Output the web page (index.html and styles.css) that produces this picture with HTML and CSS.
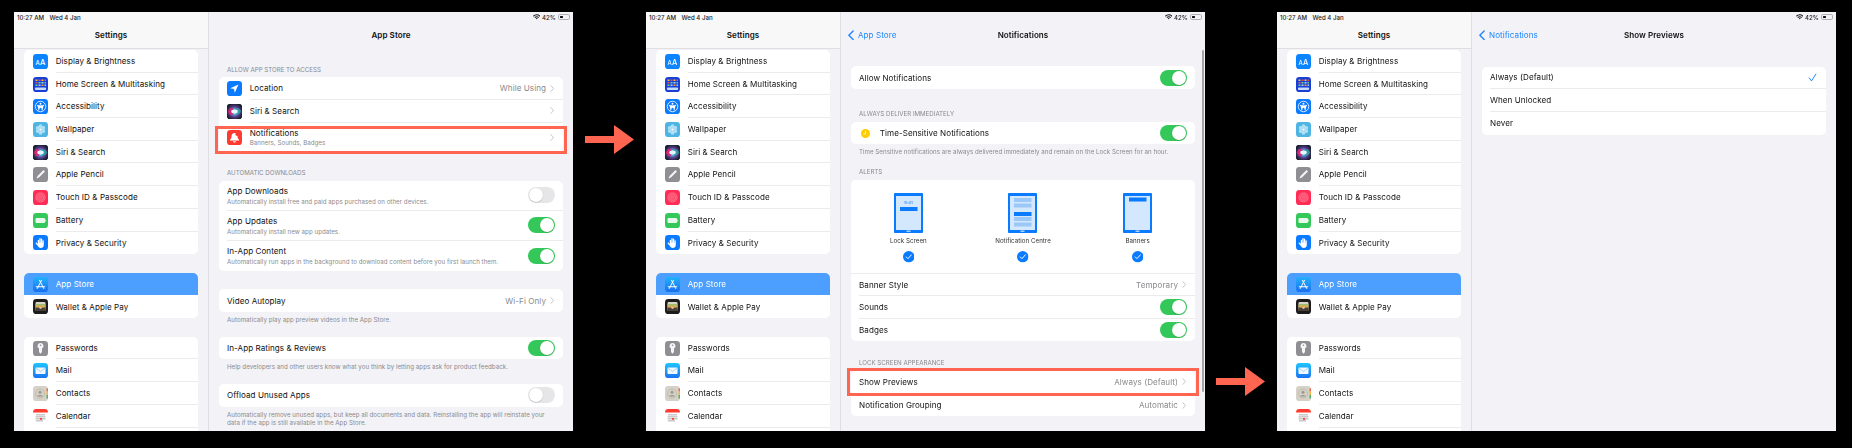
FILE: index.html
```html
<!DOCTYPE html>
<html lang="en">
<head>
<meta charset="utf-8">
<title>iPad Settings walkthrough</title>
<link rel="stylesheet" href="styles.css">
</head>
<body>
<svg class="defs" xmlns="http://www.w3.org/2000/svg">
  <defs>
    <radialGradient id="g-siri" cx="50%" cy="52%" r="55%"><stop offset="0" stop-color="#dff4ff"/><stop offset=".3" stop-color="#4fb6e0"/><stop offset=".62" stop-color="#5a3a8c"/><stop offset="1" stop-color="#17202e"/></radialGradient>
    <linearGradient id="g-store" x1="0" y1="0" x2="0" y2="1"><stop offset="0" stop-color="#22b2fb"/><stop offset="1" stop-color="#1a6ff0"/></linearGradient>
    <linearGradient id="g-mail" x1="0" y1="0" x2="0" y2="1"><stop offset="0" stop-color="#1ec6ff"/><stop offset="1" stop-color="#1a72f2"/></linearGradient>
    <symbol id="i-display" viewBox="0 0 30 30"><rect width="30" height="30" rx="6.7" fill="#0a84ff"/><text x="5" y="21" font-size="12" font-family="Inter" font-weight="500" fill="#fff">A</text><text x="14" y="21" font-size="15" font-family="Inter" font-weight="500" fill="#fff">A</text></symbol>
    <symbol id="i-home" viewBox="0 0 30 30"><rect width="30" height="30" rx="6.7" fill="#1a3fd6"/><g fill="#f2c230"><rect x="5" y="5" width="4" height="3"/><rect x="17" y="5" width="4" height="3"/></g><g fill="#e8505f"><rect x="11" y="5" width="4" height="3"/><rect x="23" y="5" width="3" height="3"/><rect x="5" y="10" width="4" height="3"/></g><g fill="#6fd36f"><rect x="11" y="10" width="4" height="3"/><rect x="23" y="10" width="3" height="3"/><rect x="5" y="15" width="4" height="3"/></g><g fill="#a7d3ff"><rect x="17" y="10" width="4" height="3"/><rect x="11" y="15" width="4" height="3"/><rect x="23" y="15" width="3" height="3"/></g><rect x="17" y="15" width="4" height="3" fill="#f29a38"/><rect x="4" y="21" width="22" height="5" rx="1.5" fill="#c6dcfa"/></symbol>
    <symbol id="i-access" viewBox="0 0 30 30"><rect width="30" height="30" rx="6.7" fill="#0a7aff"/><circle cx="15" cy="15" r="10.5" fill="none" stroke="#fff" stroke-width="1.6"/><circle cx="15" cy="9.5" r="1.9" fill="#fff"/><path d="M8.5 12.5L13 13.6V17L11.5 22.5M21.5 12.5L17 13.6V17L18.5 22.5M13 13.6H17V17H13Z" fill="#fff" stroke="#fff" stroke-width="1.4" stroke-linecap="round"/></symbol>
    <symbol id="i-wall" viewBox="0 0 30 30"><rect width="30" height="30" rx="6.7" fill="#4db4e4"/><g fill="#bfe6f8" fill-opacity=".85"><circle cx="15" cy="8.5" r="3.8"/><circle cx="15" cy="21.5" r="3.8"/><circle cx="9.4" cy="11.8" r="3.8"/><circle cx="20.6" cy="11.8" r="3.8"/><circle cx="9.4" cy="18.2" r="3.8"/><circle cx="20.6" cy="18.2" r="3.8"/></g><circle cx="15" cy="15" r="2.6" fill="#fff"/></symbol>
    <symbol id="i-siri" viewBox="0 0 30 30"><rect width="30" height="30" rx="6.7" fill="#151c2b"/><rect width="30" height="30" rx="6.7" fill="url(#g-siri)"/><path d="M2 15C6 3 13 7 15 15C12 23 6 27 2 15Z" fill="#e0256f" fill-opacity=".9"/><path d="M28 15C25 6 18 7 15 15C18 23 25 23 28 15Z" fill="#2fa6a0" fill-opacity=".8"/><ellipse cx="15" cy="15" rx="6.5" ry="3.8" fill="#e8f7ff"/></symbol>
    <symbol id="i-pencil" viewBox="0 0 30 30"><rect width="30" height="30" rx="6.7" fill="#8e8e93"/><path d="M7 23L9 18L21 6L24 9L12 21Z" fill="#f4f4f4"/></symbol>
    <symbol id="i-touch" viewBox="0 0 30 30"><rect width="30" height="30" rx="6.7" fill="#ff2d55"/><circle cx="15" cy="15" r="10" fill="#ff6e88"/><g fill="none" stroke="#ff2d55" stroke-width="1"><circle cx="15" cy="15" r="7.5"/><circle cx="15" cy="15" r="4.5"/><circle cx="15" cy="15" r="1.6"/></g></symbol>
    <symbol id="i-battery" viewBox="0 0 30 30"><rect width="30" height="30" rx="6.7" fill="#34c759"/><rect x="5" y="10" width="19" height="10" rx="2.2" fill="#e8f8ec"/><rect x="24.5" y="13" width="1.6" height="4" fill="#e8f8ec"/></symbol>
    <symbol id="i-hand" viewBox="0 0 30 30"><rect width="30" height="30" rx="6.7" fill="#0a7aff"/><path d="M9.5 11a1.3 1.3 0 0 1 2.6 0v4h.6V7.5a1.3 1.3 0 0 1 2.6 0V15h.6V8.5a1.3 1.3 0 0 1 2.6 0V16h.5v-4a1.3 1.3 0 0 1 2.6 0v8c0 4-2.7 6-6 6-3 0-4.6-1.4-5.8-3.8L5.4 17c-.7-1.5 1.3-2.6 2.2-1.3l1.9 2.3Z" fill="#fff"/></symbol>
    <symbol id="i-store" viewBox="0 0 30 30"><rect width="30" height="30" rx="6.7" fill="url(#g-store)"/><path d="M13 6.500L21.500 23M17 6.500L8.500 23M6.500 19.500H23.500" stroke="#fff" stroke-width="2" stroke-linecap="round" fill="none"/></symbol>
    <symbol id="i-wallet" viewBox="0 0 30 30"><rect width="30" height="30" rx="6.7" fill="#1c1c1e"/><rect x="5" y="6" width="20" height="18" rx="2" fill="#d9d6c4"/><rect x="5" y="10" width="20" height="3.5" fill="#9dbb6b"/><rect x="5" y="13.5" width="20" height="3.5" fill="#e4a547"/><path d="M5 17H11L15 20L19 17H25V24H5Z" fill="#4b4036"/></symbol>
    <symbol id="i-key" viewBox="0 0 30 30"><rect width="30" height="30" rx="6.7" fill="#8e8e93"/><path d="M15 4a6 6 0 0 1 3 11.2V22l-3 3.5-3-3.5v-6.8A6 6 0 0 1 15 4Z" fill="#f6f6f6"/><circle cx="15" cy="8.5" r="1.6" fill="#8e8e93"/></symbol>
    <symbol id="i-mail" viewBox="0 0 30 30"><rect width="30" height="30" rx="6.7" fill="url(#g-mail)"/><rect x="5" y="9" width="20" height="13" rx="1.6" fill="#f2f8ff"/><path d="M5.5 10L15 17L24.5 10" stroke="#7fb8f5" stroke-width="1.2" fill="none"/></symbol>
    <symbol id="i-contacts" viewBox="0 0 30 30"><rect width="30" height="30" rx="6.7" fill="#d5d1c6"/><rect x="27" y="5" width="3" height="6" fill="#ef6b4d"/><rect x="27" y="11" width="3" height="7" fill="#f3b73e"/><rect x="27" y="18" width="3" height="7" fill="#4fb26f"/><circle cx="14" cy="15" r="9" fill="none" stroke="#a9a69c" stroke-width="1"/><circle cx="14" cy="12.5" r="3" fill="#9c998f"/><path d="M8 21c1-4 11-4 12 0Z" fill="#9c998f"/></symbol>
    <symbol id="i-calendar" viewBox="0 0 30 30"><rect width="30" height="30" rx="6.7" fill="#fff"/><path d="M0 7V6.7A6.7 6.7 0 0 1 6.7 0H23.3A6.7 6.7 0 0 1 30 6.7V7Z" fill="#ff3b30"/><g fill="#9a9a9e"><rect x="6" y="11" width="18" height="1.6"/><rect x="5" y="15" width="20" height="1.6"/><rect x="6" y="23" width="14" height="1.6"/></g><rect x="5" y="19" width="20" height="1.6" fill="#9a9a9e"/><rect x="14" y="18" width="4" height="3.4" fill="#ff3b30"/></symbol>
    <symbol id="i-loc" viewBox="0 0 30 30"><rect width="30" height="30" rx="6.7" fill="#0a7aff"/><path d="M23 7L6.5 14.5L14 16L15.5 23.5Z" fill="#fff"/></symbol>
    <symbol id="i-bell" viewBox="0 0 30 30"><rect width="30" height="30" rx="6.7" fill="#ff3b30"/><path d="M15 6c-3.6 0-6 2.6-6 6.5 0 3.500-1 5-3 6.800V21h18v-1.700c-2-1.800-3-3.300-3-6.800C21 8.600 18.600 6 15 6Z" fill="#fff"/><path d="M12 22.500a3 2.600 0 0 0 6 0Z" fill="#fff"/><circle cx="20.500" cy="8.500" r="3.600" fill="#ff3b30"/></symbol>
    <symbol id="i-chev" viewBox="0 0 5 8"><path d="M1 .8L4 4L1 7.200" fill="none" stroke="currentColor" stroke-width="1.100" stroke-linecap="round" stroke-linejoin="round"/></symbol>
    <symbol id="i-back" viewBox="0 0 7 12"><path d="M6 1L1 6L6 11" fill="none" stroke="currentColor" stroke-width="1.600" stroke-linecap="round" stroke-linejoin="round"/></symbol>
    <symbol id="i-wifi" viewBox="0 0 16 12"><path d="M0 4a11.500 11.500 0 0 1 16 0L14.500 5.700a9.300 9.300 0 0 0-13 0ZM3 7a7.300 7.300 0 0 1 10 0L11.500 8.600a5 5 0 0 0-7 0ZM5.800 9.800a3.200 3.200 0 0 1 4.400 0L8 12Z" fill="currentColor"/></symbol>
    <symbol id="i-tick" viewBox="0 0 12 12"><circle cx="6" cy="6" r="6" fill="#0a7aff"/><path d="M3.400 6.200L5.200 8L8.700 4" fill="none" stroke="#fff" stroke-width="1" stroke-linecap="round" stroke-linejoin="round"/></symbol>
    <symbol id="i-clock" viewBox="0 0 12 12"><circle cx="6" cy="6" r="6" fill="#ffcc00"/><path d="M6 2.500V6.500H3" fill="none" stroke="#fff" stroke-width="1"/></symbol>
    <symbol id="i-check" viewBox="0 0 12 12"><path d="M1.500 6.500L4.700 10.500L10.500 1.500" fill="none" stroke="#0a7aff" stroke-width="1.200" stroke-linecap="round" stroke-linejoin="round"/></symbol>
    <symbol id="i-lock" viewBox="0 0 29 40"><rect x="1" y="1" width="27" height="38" rx="1.500" fill="#d3e7fd" stroke="#0a7aff" stroke-width="2"/><rect width="29" height="3" rx="1" fill="#0a7aff"/><rect y="37" width="29" height="3" rx="1" fill="#0a7aff"/><rect x="12.500" y="37.500" width="4" height="1.500" fill="#a9d0fb"/><rect x="6" y="14" width="17.500" height="4" fill="#0a7aff"/><text x="14.500" y="10.500" text-anchor="middle" font-size="4" font-family="Inter" font-weight="600" fill="#3a93fb">9:41</text></symbol>
    <symbol id="i-centre" viewBox="0 0 29 40"><rect x="1" y="1" width="27" height="38" rx="1.500" fill="#d3e7fd" stroke="#0a7aff" stroke-width="2"/><rect width="29" height="3" rx="1" fill="#0a7aff"/><rect y="37" width="29" height="3" rx="1" fill="#0a7aff"/><rect x="12.500" y="37.500" width="4" height="1.500" fill="#a9d0fb"/><g fill="#9cc8f9"><rect x="6" y="5" width="17.500" height="4"/><rect x="6" y="10.500" width="17.500" height="4"/><rect x="6" y="24" width="17.500" height="4"/><rect x="6" y="29.500" width="17.500" height="4"/></g><rect x="6" y="19" width="17.500" height="4" fill="#0a7aff"/></symbol>
    <symbol id="i-banner" viewBox="0 0 29 40"><rect x="1" y="1" width="27" height="38" rx="1.500" fill="#d3e7fd" stroke="#0a7aff" stroke-width="2"/><rect width="29" height="3" rx="1" fill="#0a7aff"/><rect y="37" width="29" height="3" rx="1" fill="#0a7aff"/><rect x="12.500" y="37.500" width="4" height="1.500" fill="#a9d0fb"/><rect x="6" y="4.500" width="17.500" height="4" fill="#0a7aff"/></symbol>
  </defs>
</svg>

<main class="stage">

  <section class="panel">
    <aside class="sidebar">
      <div class="status"><span class="time">10:27 AM</span><span class="time">Wed 4 Jan</span></div>
      <div class="nav nav-side"><span class="title">Settings</span></div>
      <div class="slist">
        <div class="sgroup">
          <div class="srow"><svg class="ico"><use href="#i-display"/></svg><div class="slabel">Display &amp; Brightness</div></div>
          <div class="srow"><svg class="ico"><use href="#i-home"/></svg><div class="slabel">Home Screen &amp; Multitasking</div></div>
          <div class="srow"><svg class="ico"><use href="#i-access"/></svg><div class="slabel">Accessibility</div></div>
          <div class="srow"><svg class="ico"><use href="#i-wall"/></svg><div class="slabel">Wallpaper</div></div>
          <div class="srow"><svg class="ico"><use href="#i-siri"/></svg><div class="slabel">Siri &amp; Search</div></div>
          <div class="srow"><svg class="ico"><use href="#i-pencil"/></svg><div class="slabel">Apple Pencil</div></div>
          <div class="srow"><svg class="ico"><use href="#i-touch"/></svg><div class="slabel">Touch ID &amp; Passcode</div></div>
          <div class="srow"><svg class="ico"><use href="#i-battery"/></svg><div class="slabel">Battery</div></div>
          <div class="srow"><svg class="ico"><use href="#i-hand"/></svg><div class="slabel">Privacy &amp; Security</div></div>
        </div>
        <div class="sgroup">
          <div class="srow selected"><svg class="ico"><use href="#i-store"/></svg><div class="slabel">App Store</div></div>
          <div class="srow"><svg class="ico"><use href="#i-wallet"/></svg><div class="slabel">Wallet &amp; Apple Pay</div></div>
        </div>
        <div class="sgroup">
          <div class="srow"><svg class="ico"><use href="#i-key"/></svg><div class="slabel">Passwords</div></div>
          <div class="srow"><svg class="ico"><use href="#i-mail"/></svg><div class="slabel">Mail</div></div>
          <div class="srow"><svg class="ico"><use href="#i-contacts"/></svg><div class="slabel">Contacts</div></div>
          <div class="srow"><svg class="ico"><use href="#i-calendar"/></svg><div class="slabel">Calendar</div></div>
          <div class="srow"><div class="ico"></div><div class="slabel"></div></div>
        </div>
      </div>
    </aside>
    <div class="pane">
      <div class="status status-right"><svg class="wifi"><use href="#i-wifi"/></svg><span class="time">42%</span><span class="batt"><span class="batt-fill"></span></span></div>
      <div class="nav"><span class="title">App Store</span></div>
      <div class="body">
        <div class="shead">ALLOW APP STORE TO ACCESS</div>
        <div class="group">
          <div class="row"><svg class="ico"><use href="#i-loc"/></svg><div class="cell"><span>Location</span><span class="val">While Using</span><svg class="chev"><use href="#i-chev"/></svg></div></div>
          <div class="row"><svg class="ico"><use href="#i-siri"/></svg><div class="cell"><span>Siri &amp; Search</span><svg class="chev"><use href="#i-chev"/></svg></div></div>
          <div class="row row-notif"><svg class="ico"><use href="#i-bell"/></svg><div class="cell"><div class="stack"><span>Notifications</span><span class="sub">Banners, Sounds, Badges</span></div><svg class="chev"><use href="#i-chev"/></svg></div><div class="hl hl-notif"></div></div>
        </div>
        <div class="shead">AUTOMATIC DOWNLOADS</div>
        <div class="group">
          <div class="row row-tall"><div class="cell"><div class="stack"><span>App Downloads</span><span class="sub">Automatically install free and paid apps purchased on other devices.</span></div><span class="toggle"></span></div></div>
          <div class="row row-tall"><div class="cell"><div class="stack"><span>App Updates</span><span class="sub">Automatically install new app updates.</span></div><span class="toggle on"></span></div></div>
          <div class="row row-tall"><div class="cell"><div class="stack"><span>In-App Content</span><span class="sub">Automatically run apps in the background to download content before you first launch them.</span></div><span class="toggle on"></span></div></div>
        </div>
        <div class="group group-gap">
          <div class="row"><div class="cell"><span>Video Autoplay</span><span class="val">Wi-Fi Only</span><svg class="chev"><use href="#i-chev"/></svg></div></div>
        </div>
        <p class="foot">Automatically play app preview videos in the App Store.</p>
        <div class="group">
          <div class="row"><div class="cell"><span>In-App Ratings &amp; Reviews</span><span class="toggle on"></span></div></div>
        </div>
        <p class="foot">Help developers and other users know what you think by letting apps ask for product feedback.</p>
        <div class="group">
          <div class="row"><div class="cell"><span>Offload Unused Apps</span><span class="toggle"></span></div></div>
        </div>
        <p class="foot">Automatically remove unused apps, but keep all documents and data. Reinstalling the app will reinstate your data if the app is still available in the App Store.</p>
      </div>
    </div>
  </section>

  <div class="gap gap-a"><svg class="arrow arrow-a" viewBox="0 0 49 29"><path d="M0 11H29V0L49 14.500L29 29V18H0Z"/></svg></div>

  <section class="panel">
    <aside class="sidebar">
      <div class="status"><span class="time">10:27 AM</span><span class="time">Wed 4 Jan</span></div>
      <div class="nav nav-side"><span class="title">Settings</span></div>
      <div class="slist">
        <div class="sgroup">
          <div class="srow"><svg class="ico"><use href="#i-display"/></svg><div class="slabel">Display &amp; Brightness</div></div>
          <div class="srow"><svg class="ico"><use href="#i-home"/></svg><div class="slabel">Home Screen &amp; Multitasking</div></div>
          <div class="srow"><svg class="ico"><use href="#i-access"/></svg><div class="slabel">Accessibility</div></div>
          <div class="srow"><svg class="ico"><use href="#i-wall"/></svg><div class="slabel">Wallpaper</div></div>
          <div class="srow"><svg class="ico"><use href="#i-siri"/></svg><div class="slabel">Siri &amp; Search</div></div>
          <div class="srow"><svg class="ico"><use href="#i-pencil"/></svg><div class="slabel">Apple Pencil</div></div>
          <div class="srow"><svg class="ico"><use href="#i-touch"/></svg><div class="slabel">Touch ID &amp; Passcode</div></div>
          <div class="srow"><svg class="ico"><use href="#i-battery"/></svg><div class="slabel">Battery</div></div>
          <div class="srow"><svg class="ico"><use href="#i-hand"/></svg><div class="slabel">Privacy &amp; Security</div></div>
        </div>
        <div class="sgroup">
          <div class="srow selected"><svg class="ico"><use href="#i-store"/></svg><div class="slabel">App Store</div></div>
          <div class="srow"><svg class="ico"><use href="#i-wallet"/></svg><div class="slabel">Wallet &amp; Apple Pay</div></div>
        </div>
        <div class="sgroup">
          <div class="srow"><svg class="ico"><use href="#i-key"/></svg><div class="slabel">Passwords</div></div>
          <div class="srow"><svg class="ico"><use href="#i-mail"/></svg><div class="slabel">Mail</div></div>
          <div class="srow"><svg class="ico"><use href="#i-contacts"/></svg><div class="slabel">Contacts</div></div>
          <div class="srow"><svg class="ico"><use href="#i-calendar"/></svg><div class="slabel">Calendar</div></div>
          <div class="srow"><div class="ico"></div><div class="slabel"></div></div>
        </div>
      </div>
    </aside>
    <div class="pane">
      <div class="status status-right"><svg class="wifi"><use href="#i-wifi"/></svg><span class="time">42%</span><span class="batt"><span class="batt-fill"></span></span></div>
      <div class="nav"><span class="back"><svg class="back-ico"><use href="#i-back"/></svg>App Store</span><span class="title">Notifications</span></div>
      <div class="scrollbar"></div>
      <div class="body">
        <div class="group group-first">
          <div class="row"><div class="cell"><span>Allow Notifications</span><span class="toggle on"></span></div></div>
        </div>
        <div class="shead shead-b">ALWAYS DELIVER IMMEDIATELY</div>
        <div class="group">
          <div class="row"><svg class="clock"><use href="#i-clock"/></svg><div class="cell"><span>Time-Sensitive Notifications</span><span class="toggle on"></span></div></div>
        </div>
        <p class="foot foot-tight">Time Sensitive notifications are always delivered immediately and remain on the Lock Screen for an hour.</p>
        <div class="shead shead-c">ALERTS</div>
        <div class="group">
          <div class="choices">
            <div class="choice"><svg class="ipad"><use href="#i-lock"/></svg><span class="choice-name">Lock Screen</span><svg class="tick"><use href="#i-tick"/></svg></div>
            <div class="choice"><svg class="ipad"><use href="#i-centre"/></svg><span class="choice-name">Notification Centre</span><svg class="tick"><use href="#i-tick"/></svg></div>
            <div class="choice"><svg class="ipad"><use href="#i-banner"/></svg><span class="choice-name">Banners</span><svg class="tick"><use href="#i-tick"/></svg></div>
          </div>
          <div class="row row-rule"><div class="cell"><span>Banner Style</span><span class="val">Temporary</span><svg class="chev"><use href="#i-chev"/></svg></div></div>
          <div class="row"><div class="cell"><span>Sounds</span><span class="toggle on"></span></div></div>
          <div class="row"><div class="cell"><span>Badges</span><span class="toggle on"></span></div></div>
        </div>
        <div class="shead shead-d">LOCK SCREEN APPEARANCE</div>
        <div class="group">
          <div class="row"><div class="cell"><span>Show Previews</span><span class="val">Always (Default)</span><svg class="chev"><use href="#i-chev"/></svg></div><div class="hl hl-prev"></div></div>
          <div class="row"><div class="cell"><span>Notification Grouping</span><span class="val">Automatic</span><svg class="chev"><use href="#i-chev"/></svg></div></div>
        </div>
      </div>
    </div>
  </section>

  <div class="gap gap-b"><svg class="arrow arrow-b" viewBox="0 0 49 29"><path d="M0 11H29V0L49 14.500L29 29V18H0Z"/></svg></div>

  <section class="panel">
    <aside class="sidebar">
      <div class="status"><span class="time">10:27 AM</span><span class="time">Wed 4 Jan</span></div>
      <div class="nav nav-side"><span class="title">Settings</span></div>
      <div class="slist">
        <div class="sgroup">
          <div class="srow"><svg class="ico"><use href="#i-display"/></svg><div class="slabel">Display &amp; Brightness</div></div>
          <div class="srow"><svg class="ico"><use href="#i-home"/></svg><div class="slabel">Home Screen &amp; Multitasking</div></div>
          <div class="srow"><svg class="ico"><use href="#i-access"/></svg><div class="slabel">Accessibility</div></div>
          <div class="srow"><svg class="ico"><use href="#i-wall"/></svg><div class="slabel">Wallpaper</div></div>
          <div class="srow"><svg class="ico"><use href="#i-siri"/></svg><div class="slabel">Siri &amp; Search</div></div>
          <div class="srow"><svg class="ico"><use href="#i-pencil"/></svg><div class="slabel">Apple Pencil</div></div>
          <div class="srow"><svg class="ico"><use href="#i-touch"/></svg><div class="slabel">Touch ID &amp; Passcode</div></div>
          <div class="srow"><svg class="ico"><use href="#i-battery"/></svg><div class="slabel">Battery</div></div>
          <div class="srow"><svg class="ico"><use href="#i-hand"/></svg><div class="slabel">Privacy &amp; Security</div></div>
        </div>
        <div class="sgroup">
          <div class="srow selected"><svg class="ico"><use href="#i-store"/></svg><div class="slabel">App Store</div></div>
          <div class="srow"><svg class="ico"><use href="#i-wallet"/></svg><div class="slabel">Wallet &amp; Apple Pay</div></div>
        </div>
        <div class="sgroup">
          <div class="srow"><svg class="ico"><use href="#i-key"/></svg><div class="slabel">Passwords</div></div>
          <div class="srow"><svg class="ico"><use href="#i-mail"/></svg><div class="slabel">Mail</div></div>
          <div class="srow"><svg class="ico"><use href="#i-contacts"/></svg><div class="slabel">Contacts</div></div>
          <div class="srow"><svg class="ico"><use href="#i-calendar"/></svg><div class="slabel">Calendar</div></div>
          <div class="srow"><div class="ico"></div><div class="slabel"></div></div>
        </div>
      </div>
    </aside>
    <div class="pane">
      <div class="status status-right"><svg class="wifi"><use href="#i-wifi"/></svg><span class="time">42%</span><span class="batt"><span class="batt-fill"></span></span></div>
      <div class="nav"><span class="back"><svg class="back-ico"><use href="#i-back"/></svg>Notifications</span><span class="title">Show Previews</span></div>
      <div class="body">
        <div class="group group-first group-third">
          <div class="row"><div class="cell"><span>Always (Default)</span><svg class="check"><use href="#i-check"/></svg></div></div>
          <div class="row"><div class="cell"><span>When Unlocked</span></div></div>
          <div class="row"><div class="cell"><span>Never</span></div></div>
        </div>
      </div>
    </div>
  </section>

</main>
</body>
</html>
```

FILE: styles.css
```css
* { box-sizing: border-box; }

html, body {
  margin: 0;
  height: 100%;
  background: #000;
}

body {
  font-family: Inter, "Liberation Sans", sans-serif;
  font-size: 8.05px;
  letter-spacing: .07px;
  color: #111;
  overflow: hidden;
}

.defs {
  display: block;
  width: 0;
  height: 0;
}

.stage {
  display: flex;
  align-items: flex-start;
  height: 448px;
  padding: 12px 0 0 14px;
  filter: blur(.35px);
}

.panel {
  display: flex;
  flex: none;
  width: 559px;
  height: 419px;
  overflow: hidden;
  background: #f2f2f7;
}

/* arrows between the screens */
.gap { flex: none; }
.gap-a { width: 73px; padding: 113px 0 0 12px; }
.gap-b { width: 72px; padding: 355px 0 0 11px; }
.arrow { display: block; width: 49px; height: 29px; fill: #ff6550; }

/* sidebar */
.sidebar {
  flex: none;
  display: flex;
  flex-direction: column;
  width: 195px;
  height: 100%;
  border-right: 1px solid #dfdfe3;
  overflow: hidden;
  background: #f2f2f7;
}

.status {
  display: flex;
  align-items: center;
  gap: 5.5px;
  flex: none;
  height: 10px;
  padding: 0 3px;
  font-size: 6.1px;
  font-weight: 500;
  letter-spacing: 0;
  color: #222;
}

.sidebar .status { background: #f8f8f9; }

.status-right {
  justify-content: flex-end;
  gap: 1.8px;
  padding-right: 3px;
}

.wifi { width: 7.5px; height: 5.6px; color: #1a1a1a; }

.batt {
  display: block;
  width: 12.5px;
  height: 6px;
  padding: 1px;
  border: .6px solid #b0b0b4;
  border-radius: 1.8px;
}

.batt-fill { display: block; width: 42%; height: 100%; background: #111; border-radius: .6px; }

.nav {
  position: relative;
  display: flex;
  align-items: center;
  justify-content: center;
  flex: none;
  height: 26px;
}

.nav-side {
  height: 27px;
  padding-bottom: 1px;
  background: #f8f8f9;
  border-bottom: 1px solid #dfdfe3;
}

.title { font-size: 8.05px; font-weight: 600; color: #111; }

.back {
  position: absolute;
  left: 7px;
  top: 0;
  bottom: 0;
  display: flex;
  align-items: center;
  gap: 4px;
  font-size: 8.05px;
  color: #1f86ff;
}

.back-ico { width: 6px; height: 10.5px; }

.slist {
  flex: 1;
  min-height: 0;
  padding: 1px 10.4px 0 10.3px;
  overflow: hidden;
}

.sgroup {
  margin-bottom: 18.6px;
  border-radius: 5px;
  overflow: hidden;
  background: #fff;
}

.srow {
  display: flex;
  align-items: center;
  gap: 8px;
  height: 22.7px;
  padding-left: 8.4px;
}

.slabel {
  flex: 1;
  align-self: stretch;
  display: flex;
  align-items: center;
  border-bottom: 1px solid #ebebee;
}

.srow:last-child .slabel { border-bottom: 0; }
.sgroup:last-child .srow:nth-last-child(2) .slabel { border-bottom: 1px solid #ebebee; }

.selected { background: #4c9ffe; color: #fff; }
.selected .slabel { border-bottom-color: transparent; }

.ico { flex: none; display: block; width: 15px; height: 15px; }

/* detail pane */
.pane {
  position: relative;
  flex: 1;
  min-width: 0;
  height: 100%;
  overflow: hidden;
}

.scrollbar {
  position: absolute;
  right: 1.3px;
  top: 38px;
  width: 1.3px;
  height: 342px;
  border-radius: 1px;
  background: #a3a3a8;
}

.body { padding: 0 10px 0 10px; }

.shead {
  height: 8px;
  margin: 17.5px 0 3.8px;
  padding-left: 8px;
  font-size: 6.15px;
  line-height: 8px;
  letter-spacing: 0;
  color: #8a8a8e;
}

.shead-b { margin-top: 21px; }
.shead-c { margin-top: 11.5px; }
.shead-d { margin-bottom: 4.3px; }

.group {
  border-radius: 5px;
  background: #fff;
}

.group-first { margin-top: 18.3px; }
.group-gap { margin-top: 18.3px; }
.group-third { margin-top: 18.6px; }

.row {
  position: relative;
  display: flex;
  align-items: center;
  gap: 7.7px;
  height: 22.7px;
  padding-left: 8px;
}

.row-notif { height: 29px; }
.row-tall { height: 30px; }

.cell {
  flex: 1;
  align-self: stretch;
  min-width: 0;
  display: flex;
  align-items: center;
  padding-right: 8.5px;
  border-bottom: 1px solid #ebebee;
}

.row:last-child .cell { border-bottom: 0; }

.row-rule { border-top: 1px solid #ebebee; }

.cell > span:first-child,
.stack { margin-right: auto; }

.stack {
  display: flex;
  flex-direction: column;
  gap: 1.6px;
  padding-top: .6px;
}

.sub { font-size: 6.15px; line-height: 8px; letter-spacing: .045px; color: #8a8a8e; }

.val { color: #8a8a8e; margin-right: 4px; }

.chev { flex: none; width: 4.500px; height: 7px; color: #c2c2c6; }

.check { flex: none; width: 9px; height: 9px; margin-right: 1px; }

.clock { flex: none; width: 9px; height: 9px; margin: 0 2.6px 0 1.500px; }

.toggle {
  flex: none;
  display: flex;
  align-items: center;
  width: 26.5px;
  height: 16px;
  margin-right: -.300px;
  padding: 1px;
  border-radius: 8px;
  background: #e6e6e9;
}

.toggle::after {
  content: "";
  width: 14px;
  height: 14px;
  border-radius: 50%;
  background: #fff;
  box-shadow: 0 .5px 1px rgba(0, 0, 0, .25);
}

.toggle.on { justify-content: flex-end; background: #34c759; }

.foot {
  margin: 0 0 12.500px;
  padding: 3.900px 8px 0;
  font-size: 6.15px;
  line-height: 8.300px;
  letter-spacing: .045px;
  color: #8a8a8e;
}

.foot-tight { margin-bottom: 0; }

.hl {
  position: absolute;
  border: 3px solid #ff6550;
}

.hl-notif { top: 3.600px; bottom: -2.600px; left: -4px; right: -4px; }
.hl-prev { top: -2.700px; bottom: -2.700px; left: -4px; right: -4px; }

.choices {
  display: grid;
  grid-template-columns: repeat(3, 1fr);
  height: 93.300px;
}

.choice {
  display: flex;
  flex-direction: column;
  align-items: center;
  padding-top: 12.700px;
}

.ipad { display: block; width: 29px; height: 40px; }

.choice-name { margin-top: 4px; font-size: 6.15px; line-height: 8px; letter-spacing: .05px; color: #333; }

.tick { display: block; width: 11.500px; height: 11.500px; margin-top: 6.500px; }
```
